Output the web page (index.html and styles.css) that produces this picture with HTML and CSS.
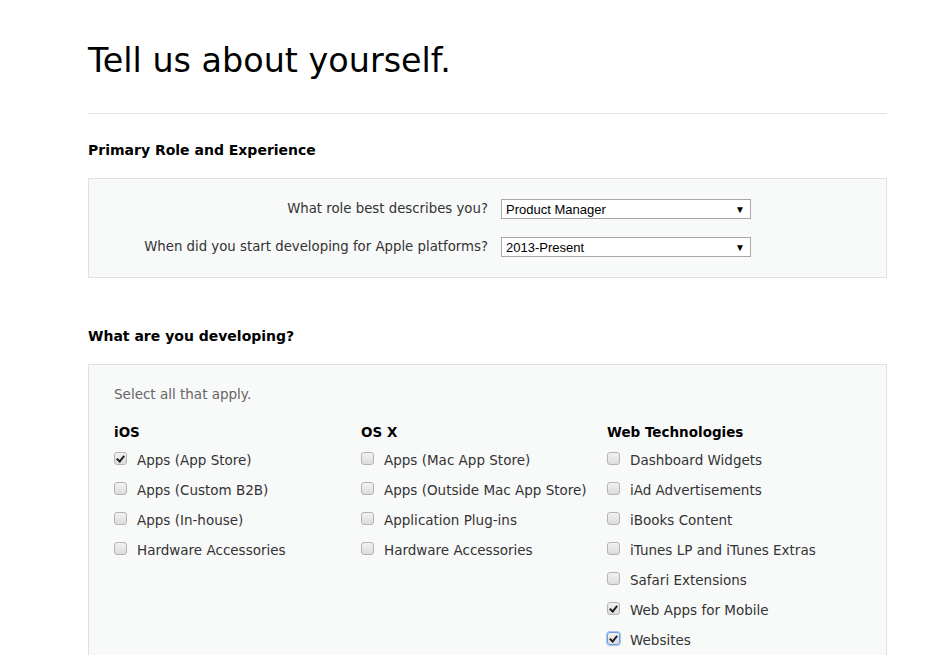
FILE: index.html
```html
<!DOCTYPE html>
<html>
<head>
<meta charset="utf-8">
<link rel="stylesheet" href="styles.css">
</head>
<body>
<main class="page">
  <h1 class="title">Tell us about yourself.</h1>
  <hr class="rule">

  <h2 class="section-title">Primary Role and Experience</h2>
  <section class="panel panel-role">
    <div class="field">
      <label class="field-label">What role best describes you?</label>
      <div class="select"><span>Product Manager</span><span class="arrow">▼</span></div>
    </div>
    <div class="field">
      <label class="field-label">When did you start developing for Apple platforms?</label>
      <div class="select"><span>2013-Present</span><span class="arrow">▼</span></div>
    </div>
  </section>

  <h2 class="section-title second">What are you developing?</h2>
  <section class="panel panel-dev">
    <p class="hint">Select all that apply.</p>
    <div class="columns">
      <div class="col">
        <h3 class="col-title">iOS</h3>
        <label class="item"><span class="box checked"></span>Apps (App Store)</label>
        <label class="item"><span class="box"></span>Apps (Custom B2B)</label>
        <label class="item"><span class="box"></span>Apps (In-house)</label>
        <label class="item"><span class="box"></span>Hardware Accessories</label>
      </div>
      <div class="col">
        <h3 class="col-title">OS X</h3>
        <label class="item"><span class="box"></span>Apps (Mac App Store)</label>
        <label class="item"><span class="box"></span>Apps (Outside Mac App Store)</label>
        <label class="item"><span class="box"></span>Application Plug-ins</label>
        <label class="item"><span class="box"></span>Hardware Accessories</label>
      </div>
      <div class="col">
        <h3 class="col-title">Web Technologies</h3>
        <label class="item"><span class="box"></span>Dashboard Widgets</label>
        <label class="item"><span class="box"></span>iAd Advertisements</label>
        <label class="item"><span class="box"></span>iBooks Content</label>
        <label class="item"><span class="box"></span>iTunes LP and iTunes Extras</label>
        <label class="item"><span class="box"></span>Safari Extensions</label>
        <label class="item"><span class="box checked"></span>Web Apps for Mobile</label>
        <label class="item"><span class="box checked focused"></span>Websites</label>
      </div>
    </div>
  </section>
</main>
</body>
</html>
```
FILE: styles.css
```css
html, body {
  margin: 0;
  padding: 0;
  background: #fff;
}
body {
  font-family: "DejaVu Sans", "Lucida Grande", sans-serif;
  color: #333;
  font-size: 13.5px;
}
.page {
  width: 799px;
  margin-left: 88px;
  padding-top: 39px;
}
.title {
  margin: 0;
  font-weight: normal;
  font-size: 33.4px;
  line-height: 44px;
  color: #000;
}
.rule {
  border: 0;
  border-top: 1px solid #e3e3e3;
  margin: 30px 0 0 0;
}
.section-title {
  margin: 25px 0 0 0;
  font-size: 14px;
  font-weight: bold;
  color: #000;
  line-height: 22px;
}
.section-title.second {
  margin-top: 47px;
}
.panel {
  background: #f8f9f9;
  border: 1px solid #e0e0e0;
  margin-top: 17px;
}
.panel-role {
  padding: 20px 0 20px 0;
  display: flex;
  flex-direction: column;
  gap: 18px;
}
.field {
  display: flex;
  align-items: center;
}
.field-label {
  width: 399px;
  text-align: right;
  padding-right: 13px;
  color: #333;
  font-size: 13.3px;
  line-height: 20px;
}
.select {
  width: 240px;
  height: 18px;
  border: 1px solid #a9a9a9;
  background: #fff;
  font-family: "Liberation Sans", Arial, sans-serif;
  font-size: 13px;
  color: #000;
  display: flex;
  align-items: center;
  justify-content: space-between;
  padding: 0 4px 0 4px;
  box-sizing: content-box;
}
.select .arrow {
  font-size: 10px;
  color: #000;
  margin-right: 1px;
}
.panel-dev {
  padding: 19px 25px 8px 25px;
}
.hint {
  margin: 0;
  color: #666;
  line-height: 20px;
}
.columns {
  display: grid;
  grid-template-columns: 247px 246px 1fr;
  margin-top: 19px;
}
.col-title {
  margin: 0 0 4px 0;
  font-size: 13.5px;
  font-weight: bold;
  color: #000;
  line-height: 18px;
}
.item {
  display: flex;
  align-items: center;
  height: 30px;
  color: #333;
}
.box {
  width: 11px;
  height: 11px;
  border: 1px solid #b4b4b4;
  border-radius: 3px;
  background: linear-gradient(#f2f2f2, #dcdcdc);
  margin-right: 10px;
  position: relative;
  flex: none;
  margin-top: -4px;
}
.box.checked::after {
  content: "";
  position: absolute;
  left: 3px;
  top: 1px;
  width: 3px;
  height: 6px;
  border: solid #222;
  border-width: 0 2px 2px 0;
  transform: rotate(40deg);
}
.box.focused {
  border-color: #6d9ae0;
  box-shadow: 0 0 0 1px #a8c4f0;
}
```
